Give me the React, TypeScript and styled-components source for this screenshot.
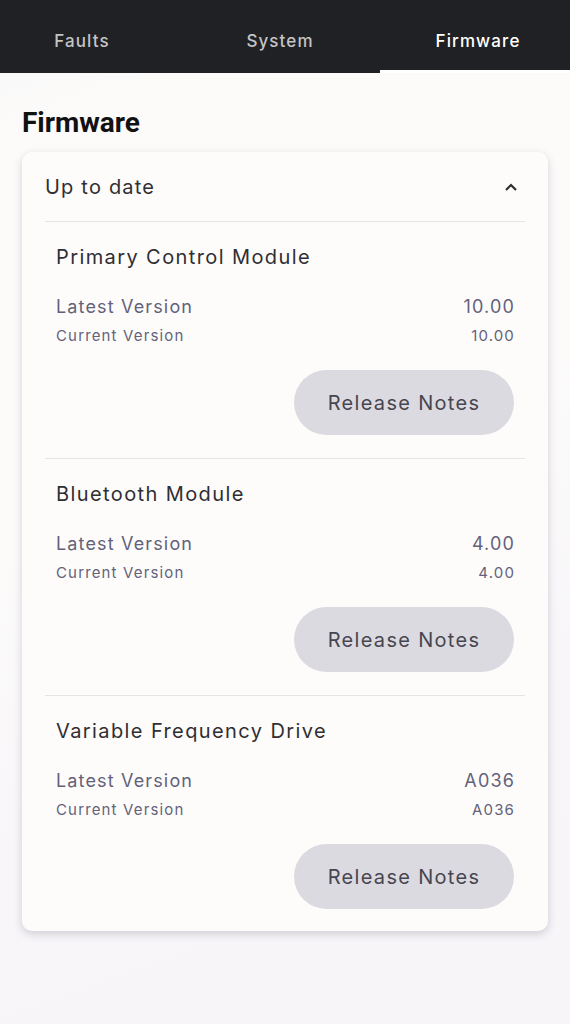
import React from "react";
import styled, { createGlobalStyle } from "styled-components";

const GlobalStyle = createGlobalStyle`
  html, body {
    margin: 0;
    padding: 0;
    background: #f8f6f8;
  }
  * { box-sizing: border-box; }
`;

interface FirmwareItem {
  name: string;
  latest: string;
  current: string;
}

const items: FirmwareItem[] = [
  { name: "Primary Control Module", latest: "10.00", current: "10.00" },
  { name: "Bluetooth Module", latest: "4.00", current: "4.00" },
  { name: "Variable Frequency Drive", latest: "A036", current: "A036" },
];

// label offsets from the column centre, as the app places them
const tabs = [
  { label: "Faults", shift: -13 },
  { label: "System", shift: -5 },
  { label: "Firmware", shift: 3 },
];

const App: React.FC = () => {
  return (
    <Page>
      <GlobalStyle />
      <TabBar>
        {tabs.map((t) => (
          <Tab key={t.label} $active={t.label === "Firmware"}>
            <TabLabel $shift={t.shift}>{t.label}</TabLabel>
          </Tab>
        ))}
      </TabBar>
      <Content>
        <Heading>Firmware</Heading>
        <Card>
          <CardHeader>
            <HeaderText>Up to date</HeaderText>
            <svg width="14" height="10" viewBox="0 0 14 10">
              <path d="M2 8 L7 3 L12 8" fill="none" stroke="#2f2f33" strokeWidth="2.2" />
            </svg>
          </CardHeader>
          {items.map((it) => (
            <Section key={it.name}>
              <ModuleName>{it.name}</ModuleName>
              <LatestRow>
                <span>Latest Version</span>
                <Value>{it.latest}</Value>
              </LatestRow>
              <CurrentRow>
                <span>Current Version</span>
                <Value>{it.current}</Value>
              </CurrentRow>
              <ButtonRow>
                <NotesButton>Release Notes</NotesButton>
              </ButtonRow>
            </Section>
          ))}
        </Card>
      </Content>
    </Page>
  );
};

const Page = styled.div`
  min-height: 1024px;
  background: linear-gradient(160deg, #f7f6f7 0%, #fcfbfa 12%, #fcfbfa 45%, #f8f6f9 70%, #f7f5f8 100%);
  font-family: "Inter", "Noto Sans", sans-serif;
`;

const TabBar = styled.div`
  height: 73px;
  background: #202124;
  display: grid;
  grid-template-columns: repeat(3, 1fr);
`;

const Tab = styled.div<{ $active: boolean }>`
  display: flex;
  align-items: center;
  justify-content: center;
  padding-top: 11px;
  font-size: 17px;
  font-weight: 500;
  letter-spacing: 1.1px;
  color: ${(p) => (p.$active ? "#ffffff" : "#c4c4c6")};
  border-bottom: 3px solid ${(p) => (p.$active ? "#ffffff" : "transparent")};
`;

const TabLabel = styled.span<{ $shift: number }>`
  margin-left: ${(p) => p.$shift * 2}px;
`;

const Content = styled.div`
  padding: 33px 22px 0 22px;
`;

const Heading = styled.h1`
  margin: 0 0 12px 0;
  font-family: "Roboto", sans-serif;
  font-weight: 700;
  font-size: 28px;
  line-height: 34px;
  color: #111111;
`;

const Card = styled.div`
  background: #fdfcfb;
  border-radius: 10px;
  box-shadow: 0 3px 8px rgba(70, 60, 90, 0.22);
  padding: 0 23px 22px 23px;
`;

const CardHeader = styled.div`
  height: 70px;
  display: flex;
  align-items: center;
  justify-content: space-between;
  padding-right: 7px;
  border-bottom: 1px solid #e6e4e7;
`;

const HeaderText = styled.span`
  font-size: 20px;
  color: #2f2f33;
  letter-spacing: 1.2px;
`;

const Section = styled.div`
  padding: 23px 11px 23px 11px;
  border-bottom: 1px solid #e6e4e7;

  &:last-child {
    border-bottom: none;
    padding-bottom: 0;
  }
`;

const ModuleName = styled.div`
  font-size: 20px;
  line-height: 24px;
  color: #2f2f33;
  letter-spacing: 1.4px;
`;

const LatestRow = styled.div`
  margin-top: 27px;
  display: flex;
  justify-content: space-between;
  font-size: 18px;
  line-height: 22px;
  color: #63627a;
  letter-spacing: 1.15px;
`;

const CurrentRow = styled.div`
  margin-top: 8px;
  display: flex;
  justify-content: space-between;
  font-size: 15px;
  line-height: 20px;
  color: #63627a;
  letter-spacing: 1.15px;
`;

const Value = styled.span`
  margin-right: -1px;
`;

const ButtonRow = styled.div`
  margin-top: 24px;
  display: flex;
  justify-content: flex-end;
`;

const NotesButton = styled.button`
  width: 220px;
  height: 65px;
  border: none;
  border-radius: 33px;
  background: #dcdae1;
  color: #47464f;
  font-family: "Inter", "Noto Sans", sans-serif;
  font-size: 20px;
  letter-spacing: 1.3px;
  cursor: pointer;
`;

export default App;
